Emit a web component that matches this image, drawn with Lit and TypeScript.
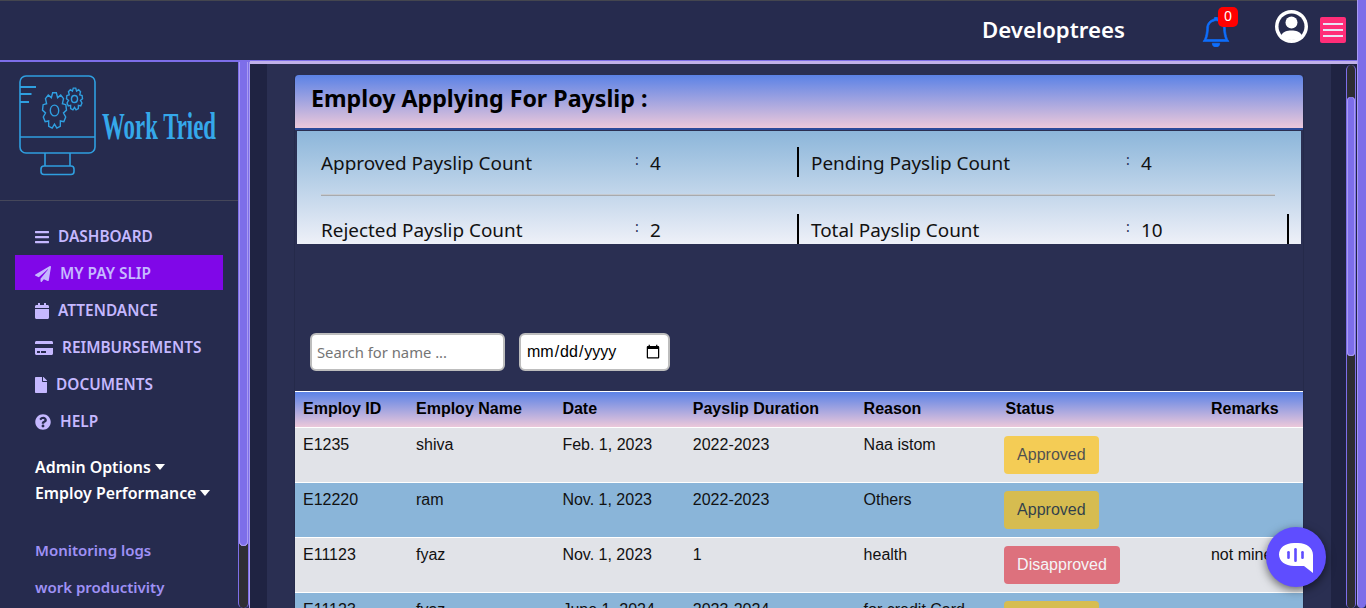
import { LitElement, html, css, svg } from 'lit';
import { customElement } from 'lit/decorators.js';

// builds a gear outline, centred on 0,0 with radius 1 (scaled in the svg)
function gearPath(teeth: number): string {
  const pts: string[] = [];
  const step = (Math.PI * 2) / teeth;
  for (let i = 0; i < teeth; i++) {
    const a = i * step - Math.PI / 2;
    const offsets: [number, number][] = [
      [-0.5, 0.76],
      [-0.22, 1],
      [0.22, 1],
      [0.5, 0.76],
    ];
    for (const [o, r] of offsets) {
      const t = a + o * step;
      pts.push(`${(Math.cos(t) * r).toFixed(3)} ${(Math.sin(t) * r).toFixed(3)}`);
    }
  }
  return 'M' + pts.join('L') + 'Z';
}

const NAV = [
  { label: 'DASHBOARD', w: 448, d: 'M16 132h416c8.837 0 16-7.163 16-16V76c0-8.837-7.163-16-16-16H16C7.163 60 0 67.163 0 76v40c0 8.837 7.163 16 16 16zm0 160h416c8.837 0 16-7.163 16-16v-40c0-8.837-7.163-16-16-16H16c-8.837 0-16 7.163-16 16v40c0 8.837 7.163 16 16 16zm0 160h416c8.837 0 16-7.163 16-16v-40c0-8.837-7.163-16-16-16H16c-8.837 0-16 7.163-16 16v40c0 8.837 7.163 16 16 16z' },
  { label: 'MY PAY SLIP', w: 512, active: true, d: 'M476 3.2L12.5 270.6c-18.1 10.4-15.8 35.6 2.2 43.2L121 358.4l287.3-253.2c5.5-4.9 13.3 2.6 8.6 8.3L176 407v80.5c0 23.6 28.5 32.9 42.5 15.8L282 426l124.6 52.2c14.2 6 30.4-2.9 33-18.2l72-432C515 7.8 493.3-6.8 476 3.2z' },
  { label: 'ATTENDANCE', w: 448, d: 'M12 192h424c6.6 0 12 5.4 12 12v260c0 26.5-21.5 48-48 48H48c-26.5 0-48-21.5-48-48V204c0-6.6 5.4-12 12-12zm436-44v-36c0-26.5-21.5-48-48-48h-48V12c0-6.6-5.4-12-12-12h-40c-6.6 0-12 5.4-12 12v52H160V12c0-6.6-5.4-12-12-12h-40c-6.6 0-12 5.4-12 12v52H48C21.5 64 0 85.5 0 112v36c0 6.6 5.4 12 12 12h424c6.6 0 12-5.4 12-12z' },
  { label: 'REIMBURSEMENTS', w: 576, d: 'M0 432c0 26.5 21.5 48 48 48h480c26.5 0 48-21.5 48-48V256H0v176zm192-68c0-6.6 5.4-12 12-12h136c6.6 0 12 5.4 12 12v40c0 6.6-5.4 12-12 12H204c-6.6 0-12-5.4-12-12v-40zm-128 0c0-6.6 5.4-12 12-12h72c6.6 0 12 5.4 12 12v40c0 6.6-5.4 12-12 12H76c-6.6 0-12-5.4-12-12v-40zM576 80v48H0V80c0-26.5 21.5-48 48-48h480c26.5 0 48 21.5 48 48z' },
  { label: 'DOCUMENTS', w: 384, d: 'M224 136V0H24C10.7 0 0 10.7 0 24v464c0 13.3 10.7 24 24 24h336c13.3 0 24-10.7 24-24V160H248c-13.2 0-24-10.8-24-24zm160-14.1v6.1H256V0h6.1c6.4 0 12.5 2.5 17 7l97.9 98c4.5 4.5 7 10.6 7 16.9z' },
  { label: 'HELP', w: 512, d: 'M504 256c0 136.997-111.043 248-248 248S8 392.997 8 256C8 119.083 119.043 8 256 8s248 111.083 248 248zM262.655 90c-54.497 0-89.255 22.957-116.549 63.758-3.536 5.286-2.353 12.415 2.715 16.258l34.699 26.31c5.205 3.947 12.621 3.008 16.665-2.122 17.864-22.658 30.113-35.797 57.303-35.797 20.429 0 45.698 13.148 45.698 32.958 0 14.976-12.363 22.667-32.534 33.976C247.128 238.528 216 254.941 216 296v4c0 6.627 5.373 12 12 12h56c6.627 0 12-5.373 12-12v-1.333c0-28.462 83.186-29.647 83.186-106.667 0-58.002-60.165-102-116.531-102zM256 338c-25.365 0-46 20.635-46 46 0 25.364 20.635 46 46 46s46-20.636 46-46c0-25.365-20.635-46-46-46z' },
];

const ROWS = [
  { id: 'E1235', name: 'shiva', date: 'Feb. 1, 2023', dur: '2022-2023', reason: 'Naa istom', status: 'Approved', remarks: '' },
  { id: 'E12220', name: 'ram', date: 'Nov. 1, 2023', dur: '2022-2023', reason: 'Others', status: 'Approved', remarks: '' },
  { id: 'E11123', name: 'fyaz', date: 'Nov. 1, 2023', dur: '1', reason: 'health', status: 'Disapproved', remarks: 'not mine' },
  { id: 'E11123', name: 'fyaz', date: 'June 1, 2024', dur: '2023-2024', reason: 'for credit Card', status: 'Approved', remarks: '' },
];

@customElement('app-root')
export class AppRoot extends LitElement {
  static styles = css`
    :host {
      display: flex;
      width: 1366px;
      height: 608px;
      overflow: hidden;
      position: relative;
      background: #262b4e;
      font-family: "Noto Sans", "Liberation Sans", sans-serif;
    }
    * { box-sizing: border-box; }
    .page {
      flex: 1;
      min-width: 0;
      display: flex;
      flex-direction: column;
    }
    header {
      height: 62px;
      flex: none;
      display: flex;
      align-items: flex-start;
      background: #262b4e;
      border-top: 1px solid #44464f;
      border-bottom: 2px solid #7d6ee9;
    }
    .brand {
      margin-left: 982px;
      width: 219px;
      margin-top: 11px;
      color: #fff;
      font-size: 22.2px;
      font-weight: 600;
      line-height: 36px;
    }
    .bell {
      position: relative;
      width: 30px;
      height: 30px;
      margin-top: 16px;
      color: #0d6efd;
    }
    .bell svg { display: block; }
    .badge {
      position: absolute;
      left: 17px;
      top: -10px;
      width: 20px;
      height: 20px;
      border-radius: 5px;
      background: #ff0000;
      color: #fff;
      font-size: 14px;
      line-height: 18px;
      text-align: center;
    }
    .avatar { margin: 9px 0 0 44px; display: block; }
    .burger {
      margin: 16px 0 0 12px;
      width: 26px;
      height: 26px;
      border-radius: 2px;
      background: #ff2d78;
      display: flex;
      flex-direction: column;
      justify-content: center;
      gap: 4px;
      padding: 0 3px;
    }
    .burger i { display: block; height: 2px; background: #e6e4f6; }

    .body { flex: 1; min-height: 0; display: flex; }

    aside {
      width: 238px;
      flex: none;
      overflow: hidden;
      background: #262b4e;
    }
    .logo {
      height: 139px;
      border-bottom: 1px solid #45475a;
    }
    .logo svg { display: block; }
    nav {
      padding-top: 17px;
      display: flex;
      flex-direction: column;
      gap: 2px;
    }
    .item {
      margin-left: 15px;
      width: 208px;
      height: 35px;
      padding: 2px 0 0 20px;
      display: flex;
      align-items: center;
      gap: 9px;
      color: #c5b8ff;
      font-size: 15.4px;
      font-weight: 600;
    }
    .item.active { background: #8007e8; }
    .item svg { fill: #c5b8ff; flex: none; }
    .menus {
      padding: 16px 0 0 35px;
      color: #fff;
      font-size: 15.9px;
      font-weight: 600;
      line-height: 26px;
    }
    .menus div { display: flex; align-items: center; gap: 4px; }
    .caret {
      width: 0;
      height: 0;
      border-left: 5.5px solid transparent;
      border-right: 5.5px solid transparent;
      border-top: 6px solid #fff;
    }
    .links {
      padding: 26px 0 0 35px;
      color: #9f91f5;
      font-size: 15px;
      font-weight: 600;
      line-height: 37px;
    }

    /* fake scrollbars, they are part of the picture */
    .bar {
      flex: none;
      background: #2e2e34;
      border-left: 1px solid #7d6ee9;
      border-right: 1px solid #7d6ee9;
      border-radius: 6px 6px 5px 5px;
    }
    .thumb {
      background: #7d6ee9;
      box-shadow: inset 1px 0 0 #a99bf2, inset -1px 0 0 #a99bf2, inset 0 -1px 0 #a99bf2;
      border-radius: 6px;
    }
    .side-bar { width: 11px; border-radius: 0 0 5px 5px; }
    .side-bar .thumb { height: 484px; border-radius: 0 0 6px 6px; }
    .side-edge { width: 1px; flex: none; background: #a99bf2; }

    .right {
      flex: 1;
      min-width: 0;
      display: flex;
      border-top: 3px solid #c0b1ea;
      background: #1f2342;
      margin-top: -1px;
    }
    main {
      margin-left: 17px;
      width: 1064px;
      flex: none;
      background: #2a2f52;
      padding: 11px 28px 0;
      overflow: hidden;
    }
    .card {
      height: 600px;
      border-left: 1px solid #252a4a;
      border-right: 1px solid #252a4a;
      margin: 0 -1px;
    }
    .title {
      height: 55px;
      padding-left: 16px;
      background: linear-gradient(#5b82e6, #ecc8da);
      background-repeat: no-repeat;
      background-size: 100% 53px;
      border-bottom: 2px solid #2b4a9a;
      border-radius: 4px 4px 0 0;
      color: #000;
      font-size: 23.2px;
      font-weight: 700;
      line-height: 47px;
    }
    .stats {
      margin: 1px 2px 0;
      height: 113px;
      overflow: hidden;
      padding: 16px 0 0 24px;
      background: linear-gradient(#8cb6da, #eef0f8);
      color: #111;
      font-size: 18.9px;
    }
    .stat-row {
      display: grid;
      grid-template-columns: 314px 15px 147px 2px 12px 315px 15px 146px 2px;
      height: 30px;
      line-height: 33px;
    }
    .rule { width: 2px; height: 30px; background: #000; }
    .rule.none { background: none; }
    .colon { font-size: 14px; line-height: 26px; color: #1a2a55; }
    hr {
      margin: 18px 26px 18px 0;
      border: none;
      height: 1px;
      background: #a7aaae;
      box-shadow: 0 -1px 0 #c6cad0;
    }
    .filters {
      margin-top: 89px;
      padding-left: 15px;
      display: flex;
      gap: 14px;
    }
    input {
      height: 38px;
      border: 2px solid #bdbdbd;
      border-radius: 6px;
      background: #fff;
      padding: 0 5px;
      outline: none;
    }
    .search {
      width: 195px;
      font-family: "Noto Sans", sans-serif;
      font-size: 14.8px;
    }
    .date {
      width: 151px;
      font-family: "Liberation Sans", sans-serif;
      font-size: 16px;
    }
    table {
      margin-top: 20px;
      width: 1008px;
      table-layout: fixed;
      border-collapse: separate;
      border-spacing: 0;
      border-top: 1px solid #fff;
      font-family: "Liberation Sans", sans-serif;
      font-size: 16px;
      color: #111;
    }
    th {
      height: 36px;
      padding: 0 8px 2px;
      text-align: left;
      font-weight: 700;
      color: #000;
      background: linear-gradient(#5b82e6, #ecc8da);
      background-repeat: no-repeat;
      background-size: 100% 35px;
      border-bottom: 1px solid #fff;
    }
    td {
      padding: 8px;
      vertical-align: top;
      border-bottom: 1px solid #fff;
      white-space: nowrap;
      overflow: hidden;
    }
    tr.odd td { background: #e1e3e8; }
    tr.even td { background: #8ab5d9; }
    .btn {
      display: block;
      width: fit-content;
      margin-left: -2px;
      padding: 7px 13.5px;
      border-radius: 4px;
      line-height: 24px;
      height: 38px;
      opacity: 0.65;
    }
    .btn.ok { background: #ffc107; color: #000; }
    .btn.no { background: #dc3545; color: #fff; }

    .outer-bar {
      width: 9px;
      flex: none;
      background: #7d6ee9;
      border-left: 1px solid #a99bf2;
      border-radius: 0 0 5px 5px;
    }
    .inner-bar { width: 10px; margin-left: 15px; margin-top: 1px; }
    .inner-bar .gap { height: 32px; }
    .inner-bar .thumb { height: 259px; }
    .chat {
      position: absolute;
      left: 1266px;
      top: 527px;
      width: 60px;
      height: 60px;
      border-radius: 50%;
      background: #5f4dff;
      box-shadow: 0 3px 10px rgba(0, 0, 0, 0.55);
      display: flex;
      align-items: center;
      justify-content: center;
    }
  `;

  private logo() {
    const big = gearPath(9);
    const small = gearPath(9);
    return svg`
      <svg width="238" height="138" viewBox="0 62 238 138" fill="none" stroke="#2f9fe0" stroke-width="1.6">
        <rect x="20" y="76" width="75" height="77" rx="6" />
        <path d="M20 137H95M45 153V166M70 153V166" />
        <rect x="41" y="166" width="33" height="8.5" rx="3" />
        <path d="M20 87H36M20 94H31.5M20 102H29" stroke-width="1.8" />
        <g transform="translate(54.5 110.5) scale(12 18)">
          <path d=${big} vector-effect="non-scaling-stroke" stroke-width="1.4" />
          <ellipse rx="0.35" ry="0.3" vector-effect="non-scaling-stroke" stroke-width="1.4" />
        </g>
        <g transform="translate(74.5 99) scale(8 11)">
          <path d=${small} vector-effect="non-scaling-stroke" stroke-width="1.4" />
          <ellipse rx="0.38" ry="0.32" vector-effect="non-scaling-stroke" stroke-width="1.4" />
        </g>
        <text x="102" y="139" textLength="114" lengthAdjust="spacingAndGlyphs"
          font-family="Liberation Serif, serif" font-weight="700" font-size="38" fill="#35a8ea" stroke="none">Work Tried</text>
      </svg>`;
  }

  private stat(label: string, value: string) {
    return html`<span>${label}</span><span class="colon">:</span><span>${value}</span>`;
  }

  render() {
    return html`
      <div class="page">
        <header>
          <div class="brand">Developtrees</div>
          <div class="bell">
            <svg width="30" height="30" viewBox="0 0 16 16" fill="currentColor" stroke="currentColor" stroke-width="0.35">
              <path d="M8 16a2 2 0 0 0 2-2H6a2 2 0 0 0 2 2zM8 1.918l-.797.161A4.002 4.002 0 0 0 4 6c0 .628-.134 2.197-.459 3.742-.16.767-.376 1.566-.663 2.258h10.244c-.287-.692-.502-1.49-.663-2.258C12.134 8.197 12 6.628 12 6a4.002 4.002 0 0 0-3.203-3.92L8 1.917zM14.22 12c.223.447.481.801.78 1H1c.299-.199.557-.553.78-1C2.68 10.2 3 6.88 3 6c0-2.42 1.72-4.44 4.005-4.901a1 1 0 1 1 1.99 0A5.002 5.002 0 0 1 13 6c0 .88.32 4.2 1.22 6z" />
            </svg>
            <span class="badge">0</span>
          </div>
          <svg class="avatar" width="33" height="33" viewBox="0 0 33 33">
            <circle cx="16.5" cy="16.5" r="16.5" fill="#fff" />
            <circle cx="16.5" cy="16.5" r="13" fill="#262b4e" />
            <circle cx="16.5" cy="12.5" r="6" fill="#fff" />
            <path d="M6 25.5C8 21.5 12 20.5 16.5 20.5S25 21.5 27 25.5C24.5 28.5 20.5 30 16.5 30S8.500 28.500 6 25.500Z" fill="#fff" />
          </svg>
          <div class="burger"><i></i><i></i><i></i></div>
        </header>
        <div class="body">
          <aside>
            <div class="logo">${this.logo()}</div>
            <nav>
              ${NAV.map(
                (n) => html`<div class="item ${n.active ? 'active' : ''}">
                  <svg height="16" width=${(n.w / 512) * 16} viewBox="0 0 ${n.w} 512"><path d=${n.d} /></svg>
                  <span>${n.label}</span>
                </div>`
              )}
            </nav>
            <div class="menus">
              <div>Admin Options <span class="caret"></span></div>
              <div>Employ Performance <span class="caret"></span></div>
            </div>
            <div class="links">
              <div>Monitoring logs</div>
              <div>work productivity</div>
            </div>
          </aside>
          <div class="bar side-bar"><div class="thumb"></div></div>
          <div class="side-edge"></div>
          <div class="right">
            <main>
              <div class="card">
                <div class="title">Employ Applying For Payslip :</div>
                <div class="stats">
                  <div class="stat-row">
                    ${this.stat('Approved Payslip Count', '4')}
                    <span class="rule"></span><span></span>
                    ${this.stat('Pending Payslip Count', '4')}
                    <span class="rule none"></span>
                  </div>
                  <hr />
                  <div class="stat-row">
                    ${this.stat('Rejected Payslip Count', '2')}
                    <span class="rule"></span><span></span>
                    ${this.stat('Total Payslip Count', '10')}
                    <span class="rule"></span>
                  </div>
                </div>
                <div class="filters">
                  <input class="search" type="text" placeholder="Search for name ..." />
                  <input class="date" type="date" />
                </div>
                <table>
                  <colgroup>
                    <col style="width:113px" /><col style="width:146.4px" /><col style="width:130.4px" /><col style="width:170.8px" /><col style="width:142px" /><col style="width:205.4px" /><col style="width:100px" />
                  </colgroup>
                  <thead>
                    <tr>
                      <th>Employ ID</th><th>Employ Name</th><th>Date</th><th>Payslip Duration</th><th>Reason</th><th>Status</th><th>Remarks</th>
                    </tr>
                  </thead>
                  <tbody>
                    ${ROWS.map(
                      (r, i) => html`<tr class=${i % 2 ? 'even' : 'odd'}>
                        <td>${r.id}</td><td>${r.name}</td><td>${r.date}</td><td>${r.dur}</td><td>${r.reason}</td>
                        <td><span class="btn ${r.status === 'Approved' ? 'ok' : 'no'}">${r.status}</span></td>
                        <td>${r.remarks}</td>
                      </tr>`
                    )}
                  </tbody>
                </table>
              </div>
            </main>
            <div class="bar inner-bar"><div class="gap"></div><div class="thumb"></div></div>
          </div>
        </div>
      </div>
      <div class="outer-bar"></div>
      <div class="chat">
        <svg width="36" height="32" viewBox="0 0 36 32">
          <path d="M16 2H20C29 2 35 7 35 14V32L26 25H16C7 25 1 20 1 13.500S7 2 16 2Z" fill="#fff" />
          <rect x="9.200" y="10" width="2.600" height="8" rx="1.300" fill="#5f4dff" />
          <rect x="16.200" y="7" width="2.600" height="14" rx="1.300" fill="#5f4dff" />
          <rect x="23.200" y="10" width="2.600" height="8" rx="1.300" fill="#5f4dff" />
        </svg>
      </div>
    `;
  }
}
